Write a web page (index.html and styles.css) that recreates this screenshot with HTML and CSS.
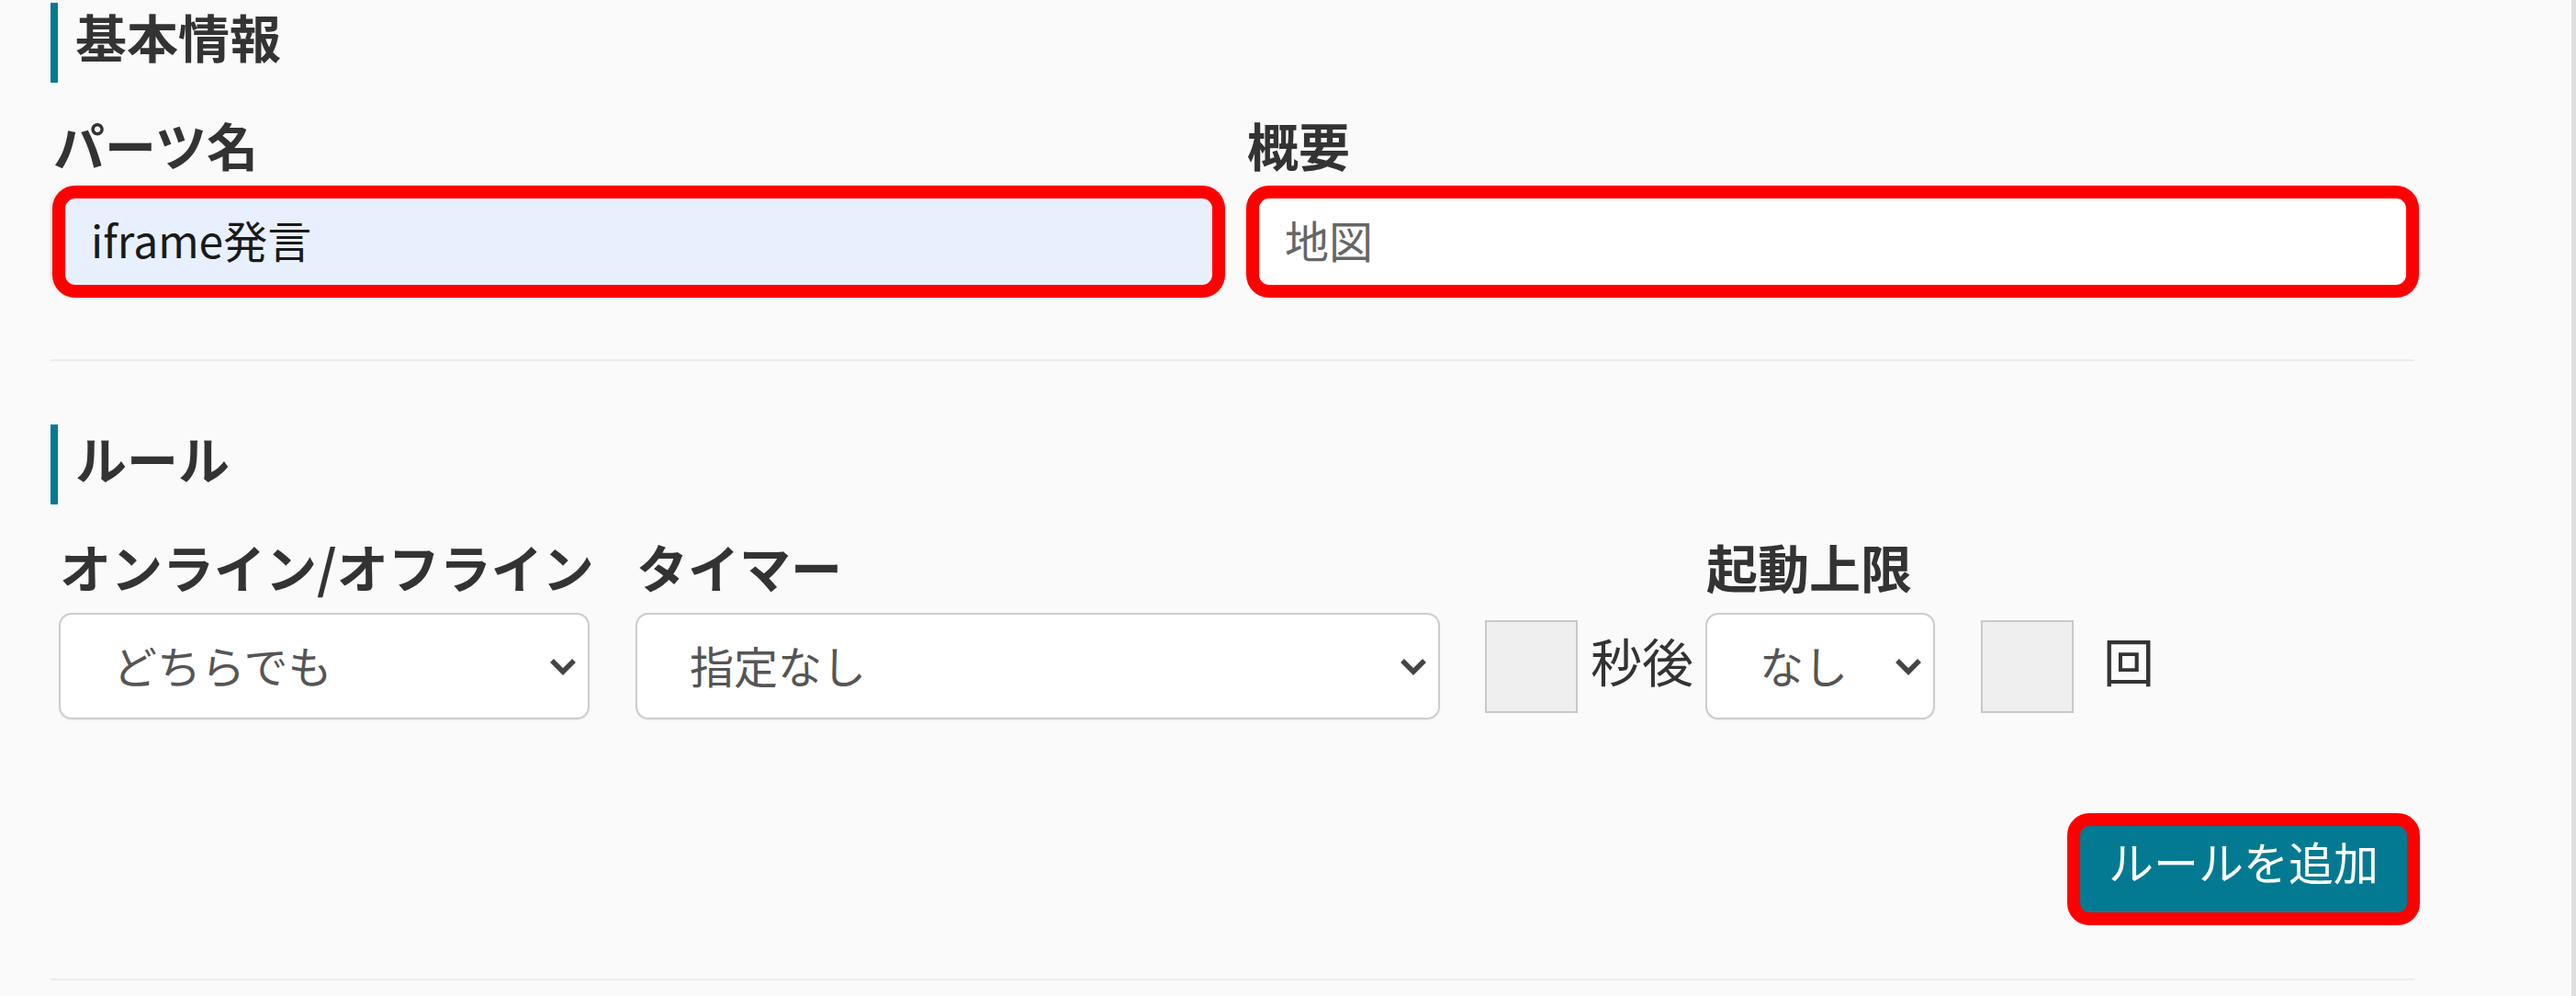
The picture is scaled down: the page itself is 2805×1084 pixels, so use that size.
FILE: index.html
```html
<!DOCTYPE html>
<html lang="ja">
<head>
<meta charset="utf-8">
<title>パーツ編集</title>
<link rel="stylesheet" href="styles.css">
</head>
<body>
<div class="page">
  <main class="content">
    <section class="sec">
      <h2 class="sec-title">基本情報</h2>
      <div class="field-grid">
        <div class="field">
          <label class="field-label" for="name">パーツ名</label>
          <input id="name" class="text-input is-autofill mark" type="text" value="iframe発言">
        </div>
        <div class="field">
          <label class="field-label" for="summary">概要</label>
          <input id="summary" class="text-input mark" type="text" placeholder="地図">
        </div>
      </div>
    </section>
    <hr class="divider">
    <section class="sec">
      <h2 class="sec-title">ルール</h2>
      <div class="rule-grid">
        <span class="field-label c1">オンライン/オフライン</span>
        <span class="field-label c2">タイマー</span>
        <span class="field-label c5">起動上限</span>

        <div class="select c1"><span>どちらでも</span><svg class="chev" viewBox="0 0 30 20" width="30" height="20"><path d="M3 4 L15 16 L27 4"/></svg></div>
        <div class="select c2"><span>指定なし</span><svg class="chev" viewBox="0 0 30 20" width="30" height="20"><path d="M3 4 L15 16 L27 4"/></svg></div>
        <div class="num-box c3"></div>
        <span class="unit c4">秒後</span>
        <div class="select c5"><span>なし</span><svg class="chev" viewBox="0 0 30 20" width="30" height="20"><path d="M3 4 L15 16 L27 4"/></svg></div>
        <div class="num-box c6"></div>
        <span class="unit c7">回</span>
      </div>
      <div class="actions">
        <button class="btn-primary mark" type="button">ルールを追加</button>
      </div>
    </section>
    <hr class="divider divider-bottom">
  </main>
  <aside class="scroll-edge"></aside>
</div>
</body>
</html>
```

FILE: styles.css
```css
* { box-sizing: border-box; }

html, body {
  margin: 0;
  padding: 0;
  background: #fafafa;
}

body {
  font-family: "Noto Sans CJK JP", "Noto Sans", sans-serif;
  color: #333;
}

.page {
  display: flex;
  min-height: 1084px;
}

.content {
  flex: 1;
  padding: 3px 166px 0 55px;
}

.scroll-edge {
  width: 5px;
  background: #dfdfdf;
}

.sec-title {
  margin: 0;
  border-left: 8px solid #047a92;
  padding: 0 0 15px 19px;
  font-size: 56px;
  line-height: 72px;
  font-weight: 700;
  color: #333;
}

.field-grid {
  display: grid;
  grid-template-columns: 1fr 1fr;
  column-gap: 23px;
  margin-left: 2px;
  margin-top: 26px;
}

.field {
  display: flex;
  flex-direction: column;
}

.field-label {
  font-size: 56px;
  line-height: 81px;
  font-weight: 700;
  color: #333;
  white-space: nowrap;
  margin-bottom: 5px;
  padding-left: 1px;
}

.mark {
  border: 14px solid #ff0000;
  border-radius: 25px;
}

.text-input {
  width: 100%;
  height: 122px;
  padding: 0 0 6px 28px;
  font-family: "Noto Sans CJK JP", "Noto Sans", sans-serif;
  font-size: 48px;
  color: #1a1a1a;
  background: #ffffff;
  outline: none;
}

.text-input::placeholder {
  color: #666;
}

.is-autofill {
  background: #e8f0fe;
  box-shadow: -2px 0 3px rgba(0, 0, 0, 0.12);
}

.divider {
  border: 0;
  height: 2px;
  background: #ececec;
  margin: 67px 5px 69px 0;
}

.divider-bottom {
  margin-top: 58px;
  margin-bottom: 0;
}

.rule-grid {
  display: grid;
  grid-template-columns: 578px 50px 876px 49px 101px 14px max-content 13px 250px 50px 101px 32px max-content;
  grid-template-rows: auto 116px;
  align-items: center;
  margin-top: 26px;
  padding-left: 9px;
}

.rule-grid .field-label {
  grid-row: 1;
  margin-bottom: 11px;
  align-self: end;
}

.c1 { grid-column: 1; }
.c2 { grid-column: 3; }
.c3 { grid-column: 5; }
.c4 { grid-column: 7; }
.c5 { grid-column: 9; }
.c6 { grid-column: 11; }
.c7 { grid-column: 13; }

.select,
.num-box,
.unit {
  grid-row: 2;
}

.select {
  height: 116px;
  display: flex;
  align-items: center;
  justify-content: space-between;
  padding: 0 12px 4px 57px;
  background: #fff;
  border: 2px solid #cdcdcd;
  border-radius: 14px;
  box-shadow: 0 1px 2px rgba(0, 0, 0, 0.06);
  font-size: 48px;
  color: #555;
  white-space: nowrap;
}

.chev {
  flex: none;
  margin-top: 4px;
}

.chev path {
  fill: none;
  stroke: #444;
  stroke-width: 5.5;
}

.num-box {
  width: 101px;
  height: 101px;
  background: #efefef;
  border: 2px solid #c8c8c8;
}

.unit {
  font-size: 56px;
  line-height: 72px;
  padding-bottom: 14px;
  color: #333;
  white-space: nowrap;
}

.actions {
  display: flex;
  justify-content: flex-end;
  margin-top: 102px;
  margin-right: -1px;
}

.btn-primary {
  width: 384px;
  height: 122px;
  background: #047a92;
  color: #fff;
  font-family: "Noto Sans CJK JP", "Noto Sans", sans-serif;
  font-size: 49px;
  line-height: 75px;
  padding: 0 0 20px;
  border-radius: 24px;
  cursor: pointer;
}
```
